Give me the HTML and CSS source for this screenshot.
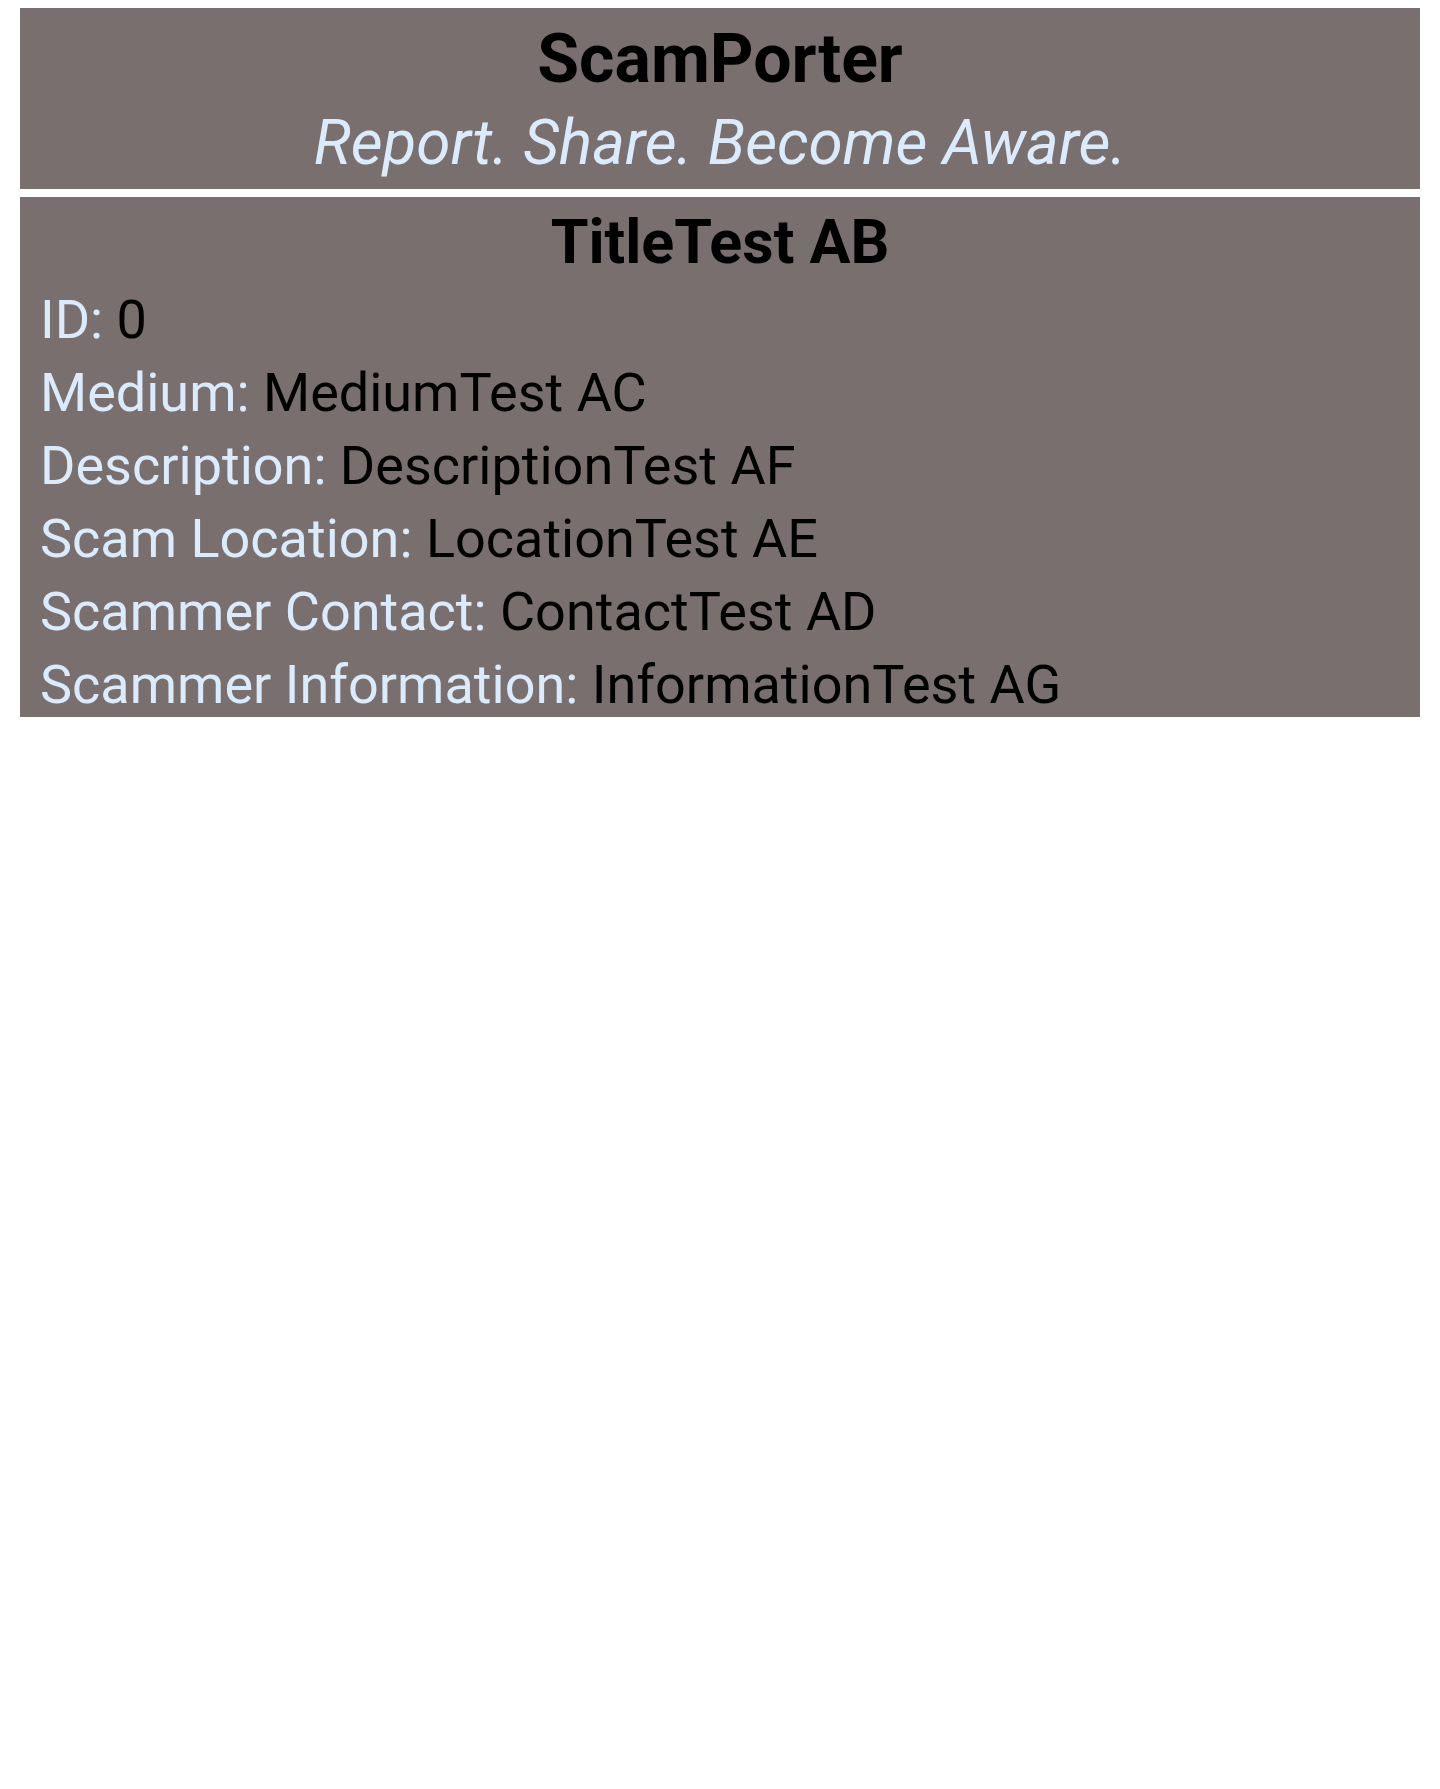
FILE: index.html
```html
<!DOCTYPE html>
<html lang="en">
<head>
<meta charset="utf-8">
<title>ScamPorter</title>
<link rel="stylesheet" href="styles.css">
</head>
<body>
<div class="page">
  <header class="banner">
    <h1 class="brand">ScamPorter</h1>
    <p class="tagline">Report. Share. Become Aware.</p>
  </header>
  <article class="report">
    <h2 class="report-title">TitleTest AB</h2>
    <div class="field"><span class="label">ID:</span> <span class="value">0</span></div>
    <div class="field"><span class="label">Medium:</span> <span class="value">MediumTest AC</span></div>
    <div class="field"><span class="label">Description:</span> <span class="value">DescriptionTest AF</span></div>
    <div class="field"><span class="label">Scam Location:</span> <span class="value">LocationTest AE</span></div>
    <div class="field"><span class="label">Scammer Contact:</span> <span class="value">ContactTest AD</span></div>
    <div class="field"><span class="label">Scammer Information:</span> <span class="value">InformationTest AG</span></div>
  </article>
</div>
</body>
</html>
```
FILE: styles.css
```css
html, body {
  margin: 0;
  padding: 0;
  background: #ffffff;
}
body {
  font-family: Roboto, "Noto Sans", sans-serif;
  color: #000;
}
.page {
  display: flex;
  flex-direction: column;
  gap: 8px;
  padding: 8px 20px;
}
.banner {
  background: #7a6f6f;
  padding: 11px 16px 10px;
  display: flex;
  flex-direction: column;
  align-items: center;
  gap: 7px;
}
.brand {
  margin: 0;
  font-size: 68px;
  font-weight: 700;
  line-height: normal;
  color: #000;
}
.tagline {
  margin: 0;
  font-size: 62px;
  font-style: italic;
  line-height: normal;
  color: #dcebfc;
}
.report {
  background: #7a6f6f;
  padding: 9px 20px 1px;
  display: flex;
  flex-direction: column;
  gap: 10px;
}
.report-title {
  margin: 0;
  text-align: center;
  font-size: 61px;
  font-weight: 700;
  line-height: normal;
  color: #000;
}
.field {
  font-size: 54px;
  line-height: normal;
}
.label {
  color: #dcebfc;
}
.value {
  color: #000;
}
```
